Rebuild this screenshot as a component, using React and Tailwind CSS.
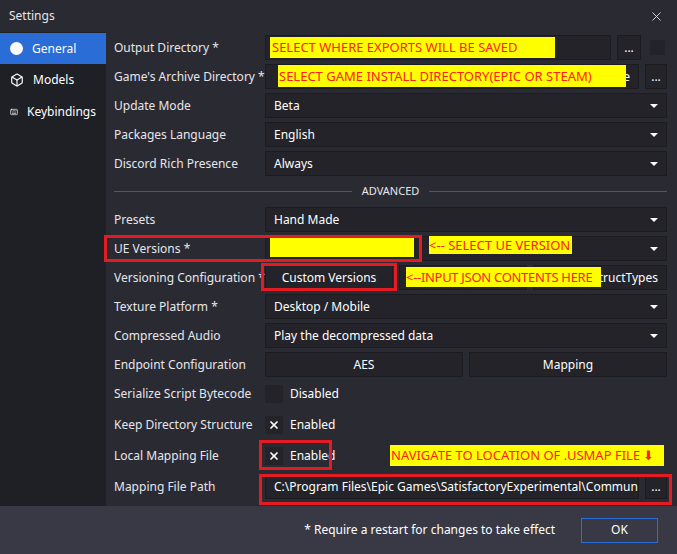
import React from 'react'
import { X, Box, Keyboard } from 'lucide-react'

const field = 'h-[25px] min-w-0 bg-[#232329] border border-[#1b1b20] flex items-center px-2 text-[12px] text-white'

function Caret() {
  return <span className="ml-auto shrink-0 w-0 h-0 border-l-[4px] border-r-[4px] border-t-[4px] border-l-transparent border-r-transparent border-t-white" />
}

function Row({ label, children }) {
  return (
    <div className="flex items-center h-[29px]">
      <div className="w-[151px] shrink-0 text-[12px] text-[#e6e6ea] whitespace-nowrap">{label}</div>
      <div className="flex-1 min-w-0 flex items-center gap-[6px]">{children}</div>
    </div>
  )
}

function Select({ value }) {
  return <div className={`${field} flex-1 pr-2`}><span>{value}</span><Caret /></div>
}

function Check({ on, label }) {
  return (
    <div className="flex items-center gap-[7px] text-[12px] text-white">
      <span className="w-[18px] h-[18px] bg-[#232329] flex items-center justify-center">{on && <X size={12} strokeWidth={3.5} />}</span>
      {label}
    </div>
  )
}

const note = 'absolute bg-[#ffff00] text-[#ff2020] text-[13px] leading-none flex items-center whitespace-nowrap overflow-hidden'
const redBox = 'absolute border-[3px] border-[#e51b23]'

export default function App() {
  return (
    <div className="relative w-[677px] h-[554px] overflow-hidden bg-[#2a2a33] flex flex-col" style={{ fontFamily: '"Noto Sans", "Open Sans", sans-serif' }}>
      <div className="h-[32px] flex items-center px-[9px] text-[12px] text-[#e6e6ea]">
        Settings
        <X size={15} strokeWidth={1.4} className="ml-auto mr-[4px]" />
      </div>
      <div className="flex flex-1">
        <div className="w-[106px] bg-[#1f1f26] pt-[1px]">
          <div className="h-[31px] bg-[#2a6dd6] flex items-center gap-[9px] px-[10px] text-[12px] text-white">
            <span className="w-[13px] h-[13px] rounded-full bg-white" /> General
          </div>
          <div className="h-[32px] flex items-center gap-[9px] px-[10px] text-[12px] text-white">
            <Box size={14} /> Models
          </div>
          <div className="h-[32px] flex items-center gap-[9px] px-[10px] text-[12px] text-white">
            <Keyboard size={14} /> Keybindings
          </div>
        </div>
        <div className="flex-1 min-w-0 pl-[8px] pr-[10px] pt-[1px]">
          <Row label="Output Directory *">
            <div className={`${field} w-[346px]`} />
            <div className={`${field} w-[24px] justify-center px-0`}>...</div>
            <div className="w-[15px] h-[15px] bg-[#232329] ml-[3px]" />
          </Row>
          <Row label="Game's Archive Directory *">
            <div className={`${field} flex-1 justify-end`}>e</div>
            <div className={`${field} w-[22px] shrink-0 justify-center px-0`}>...</div>
          </Row>
          <Row label="Update Mode"><Select value="Beta" /></Row>
          <Row label="Packages Language"><Select value="English" /></Row>
          <Row label="Discord Rich Presence"><Select value="Always" /></Row>
          <div className="h-[27px] flex items-center gap-[10px]">
            <div className="flex-1 h-px bg-[#55556a]" />
            <span className="text-[11px] text-[#e6e6ea]">ADVANCED</span>
            <div className="flex-1 h-px bg-[#55556a]" />
          </div>
          <Row label="Presets"><Select value="Hand Made" /></Row>
          <Row label="UE Versions *"><Select value="" /></Row>
          <Row label="Versioning Configuration *">
            <div className={`${field} w-[128px] shrink-0 justify-center`}>Custom Versions</div>
            <div className={`${field} w-[128px] shrink-0`} />
            <div className={`${field} flex-1 justify-end overflow-hidden`}>MapStructTypes</div>
          </Row>
          <Row label="Texture Platform *"><Select value="Desktop / Mobile" /></Row>
          <Row label="Compressed Audio"><Select value="Play the decompressed data" /></Row>
          <Row label="Endpoint Configuration">
            <div className={`${field} flex-1 justify-center`}>AES</div>
            <div className={`${field} flex-1 justify-center`}>Mapping</div>
          </Row>
          <Row label="Serialize Script Bytecode"><Check label="Disabled" /></Row>
          <div className="h-[2px]" />
          <Row label="Keep Directory Structure"><Check on label="Enabled" /></Row>
          <div className="h-[2px]" />
          <Row label="Local Mapping File"><Check on label="Enabled" /></Row>
          <div className="h-[2px]" />
          <Row label="Mapping File Path">
            <div className={`${field} flex-1 overflow-hidden whitespace-nowrap`}>C:\Program Files\Epic Games\SatisfactoryExperimental\CommunityResources\FactoryGame.usmap</div>
            <div className={`${field} w-[22px] shrink-0 justify-center px-0`}>...</div>
          </Row>
        </div>
      </div>
      <div className="h-[48px] bg-[#393945] flex items-center justify-end gap-[26px] pr-[19px] text-[12px] text-white">
        <span>* Require a restart for changes to take effect</span>
        <div className="w-[77px] h-[25px] border border-[#2a6dd6] flex items-center justify-center">OK</div>
      </div>

      <div className={`${note} left-[270px] top-[37px] w-[285px] h-[21px] pl-[2px]`}>SELECT WHERE EXPORTS WILL BE SAVED</div>
      <div className={`${note} left-[278px] top-[65px] w-[348px] h-[22px] pl-[1px]`}>SELECT GAME INSTALL DIRECTORY(EPIC OR STEAM)</div>
      <div className={`${note} left-[270px] top-[238px] w-[144px] h-[19px]`} />
      <div className={`${redBox} left-[104px] top-[235px] w-[318px] h-[27px]`} />
      <div className={`${note} left-[429px] top-[236px] w-[143px] h-[18px]`}>&lt;-- SELECT UE VERSION</div>
      <div className={`${redBox} left-[261px] top-[263px] w-[136px] h-[28px]`} />
      <div className={`${note} left-[406px] top-[267px] w-[195px] h-[20px] tracking-[-0.3px]`}>&lt;--INPUT JSON CONTENTS HERE</div>
      <div className={`${redBox} left-[259px] top-[440px] w-[73px] h-[30px]`} />
      <div className={`${redBox} left-[259px] top-[474px] w-[413px] h-[31px]`} />
      <div className={`${note} left-[390px] top-[445px] w-[274px] h-[21px] pl-[1px]`}>NAVIGATE TO LOCATION OF .USMAP FILE ⬇</div>
    </div>
  )
}
